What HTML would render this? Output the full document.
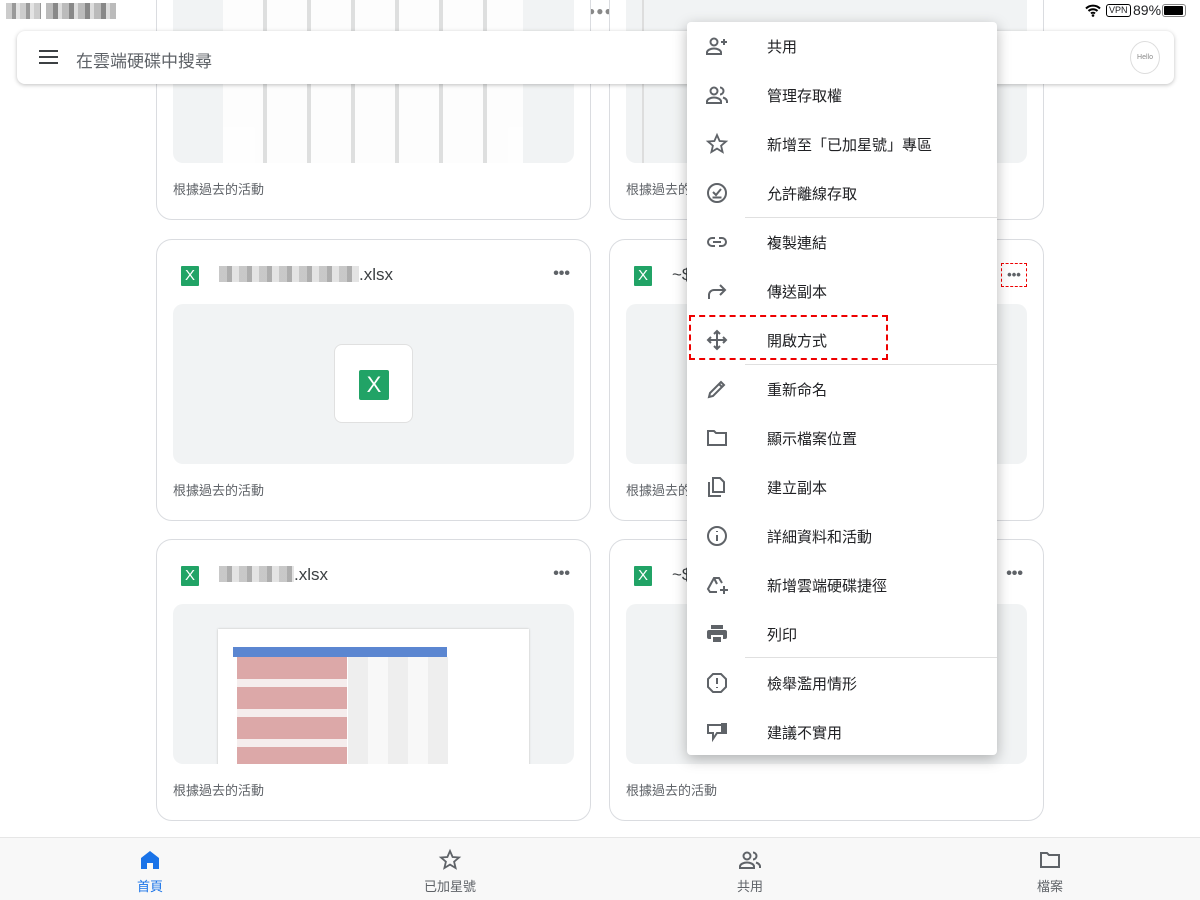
<!DOCTYPE html>
<html><head><meta charset="utf-8"><style>
*{margin:0;padding:0;box-sizing:border-box}
body{width:1200px;height:900px;overflow:hidden;background:#fff;font-family:"Liberation Sans","Noto Sans CJK TC",sans-serif;position:relative;color:#202124}
.abs{position:absolute}
.card{position:absolute;width:435px;height:282px;border:1px solid #dadce0;border-radius:16px;background:#fff}
.prev{position:absolute;left:16px;top:64px;width:401px;height:160px;background:#f1f3f4;border-radius:10px;overflow:hidden}
.foot{position:absolute;left:16px;top:240px;font-size:13px;color:#5f6368}
.xi{position:absolute;left:24px;top:26px;width:18px;height:20px;background:#21a366;color:#fff;font-size:15px;text-align:center;line-height:20px;border-radius:1px}
.name{position:absolute;left:62px;top:25px;font-size:17px;color:#3c4043}
.blur{display:inline-block;height:16px;background:repeating-linear-gradient(90deg,#bbb 0 8px,#999 8px 13px,#ddd 13px 20px);vertical-align:-2px;opacity:.8}
.dots{position:absolute;right:20px;top:25px;font-size:16px;letter-spacing:0px;color:#5f6368;font-weight:bold}
.menu{position:absolute;left:687px;top:22px;width:310px;height:733px;background:#fff;border-radius:4px;box-shadow:0 4px 14px rgba(0,0,0,.28)}
.mi{position:absolute;left:0;width:310px;height:49px}
.mi svg{position:absolute;left:18px;top:12px;width:24px;height:24px}
.mi span{position:absolute;left:80px;top:14px;font-size:15px;color:#202124}
.div{position:absolute;left:58px;width:252px;height:1px;background:#e0e0e0}
.nav{position:absolute;left:0;top:837px;width:1200px;height:63px;background:#f8f8f8;border-top:1px solid #e6e6e6}
.nv{position:absolute;top:10px;width:100px;text-align:center;font-size:13px;color:#5f6368}
.nv svg{display:block;margin:0 auto 4px;width:24px;height:24px}
</style></head><body>
<!-- status bar -->
<div class="abs" style="left:6px;top:3px;width:35px;height:16px;background:repeating-linear-gradient(90deg,#ccc 0 6px,#999 6px 10px,#e3e3e3 10px 14px)"></div>
<div class="abs" style="left:46px;top:3px;width:70px;height:16px;background:repeating-linear-gradient(90deg,#bbb 0 7px,#888 7px 12px,#ddd 12px 16px)"></div>
<div class="abs" style="left:588px;top:4px;font-size:12px;color:#888;letter-spacing:1px">●●●</div>
<svg class="abs" style="left:1085px;top:4px" width="16" height="13" viewBox="0 0 16 13"><path d="M1 4.5a10 10 0 0 1 14 0M3.5 7a6.5 6.5 0 0 1 9 0M6 9.5a3 3 0 0 1 4 0" stroke="#000" stroke-width="2" fill="none"/><circle cx="8" cy="11.5" r="1.3"/></svg>
<div class="abs" style="left:1106px;top:4px;border:1.3px solid #000;border-radius:3px;font-size:9px;padding:0 2px;line-height:11px">VPN</div>
<div class="abs" style="left:1133px;top:2px;font-size:14px">89%</div>
<div class="abs" style="left:1162px;top:4px;width:24px;height:13px;border:1px solid #888;border-radius:3px;padding:1px"><div style="width:19px;height:9px;background:#000;border-radius:1px"></div></div>

<!-- cards -->
<div class="card" style="left:156px;top:-62px">
 <div class="prev" style="top:14px;height:210px;left:16px">
  <div class="abs" style="left:50px;top:0;width:300px;height:210px;background:repeating-linear-gradient(90deg,#fff 0 40px,#ddd 40px 44px),#fff;opacity:.9"></div>
 </div>
 <div class="foot">根據過去的活動</div>
</div>
<div class="card" style="left:609px;top:-62px">
 <div class="prev" style="top:14px;height:210px"><div class="abs" style="left:16px;top:0;width:2px;height:210px;background:#ddd"></div></div>
 <div class="foot">根據過去的活動</div>
</div>
<div class="card" style="left:156px;top:239px">
 <div class="xi">X</div><div class="name"><span class="blur" style="width:140px"></span>.xlsx</div><div class="dots">•••</div>
 <div class="prev"><div class="abs" style="left:161px;top:40px;width:79px;height:79px;background:#fff;border:1px solid #e0e0e0;border-radius:8px"><div style="position:absolute;left:24px;top:25px;width:30px;height:30px;background:#21a366;color:#fff;font-size:22px;text-align:center;line-height:30px;border-radius:2px">X</div></div></div>
 <div class="foot">根據過去的活動</div>
</div>
<div class="card" style="left:609px;top:239px">
 <div class="xi">X</div><div class="name">~$</div>
 <div class="abs" style="left:391px;top:23px;width:26px;height:24px;border:1.5px dashed #e00;color:#5f6368;font-size:13px;font-weight:bold;text-align:center;line-height:21px">•••</div>
 <div class="prev"></div>
 <div class="foot">根據過去的活動</div>
</div>
<div class="card" style="left:156px;top:539px">
 <div class="xi">X</div><div class="name"><span class="blur" style="width:75px"></span>.xlsx</div><div class="dots">•••</div>
 <div class="prev"><div class="abs" style="left:45px;top:25px;width:311px;height:140px;background:#fff;box-shadow:0 0 2px #bbb">
  <div class="abs" style="left:15px;top:18px;width:214px;height:10px;background:#5b86d1"></div>
  <div class="abs" style="left:19px;top:28px;width:110px;height:112px;background:repeating-linear-gradient(180deg,#dca8a8 0 22px,#f5eded 22px 30px)"></div>
  <div class="abs" style="left:130px;top:28px;width:100px;height:112px;background:repeating-linear-gradient(90deg,#eee 0 20px,#f8f8f8 20px 40px)"></div>
 </div></div>
 <div class="foot">根據過去的活動</div>
</div>
<div class="card" style="left:609px;top:539px">
 <div class="xi">X</div><div class="name">~$</div><div class="dots">•••</div>
 <div class="prev"></div>
 <div class="foot">根據過去的活動</div>
</div>

<!-- search bar -->
<div class="abs" style="left:17px;top:31px;width:1157px;height:53px;background:#fff;border-radius:8px;box-shadow:0 1px 4px rgba(0,0,0,.25)">
 <div class="abs" style="left:22px;top:19px;width:19px;height:2px;background:#3c4043;box-shadow:0 6px 0 #3c4043,0 12px 0 #3c4043"></div>
 <div class="abs" style="left:59px;top:16px;font-size:17px;color:#5f6368">在雲端硬碟中搜尋</div>
 <div class="abs" style="left:1113px;top:10px;width:30px;height:33px;border:1px solid #ddd;border-radius:50%;font-size:7px;color:#888;text-align:center;line-height:31px">Hello</div>
</div>

<!-- menu -->
<div class="menu">
 <div class="mi" style="top:0"><svg viewBox="0 0 24 24" fill="none" stroke="#5f6368" stroke-width="2"><circle cx="9" cy="8" r="3.5"/><path d="M2 20v-1.5c0-2.5 4-4 7-4s7 1.5 7 4V20zM19 5v6M16 8h6"/></svg><span>共用</span></div>
 <div class="mi" style="top:49px"><svg viewBox="0 0 24 24" fill="none" stroke="#5f6368" stroke-width="2"><circle cx="9" cy="8" r="3.5"/><path d="M2 20v-1.5c0-2.5 4-4 7-4s7 1.5 7 4V20zM15 4.5a3.5 3.5 0 0 1 0 7M18 14.5c2 .7 4 2 4 4V20"/></svg><span>管理存取權</span></div>
 <div class="mi" style="top:98px"><svg viewBox="0 0 24 24" fill="none" stroke="#5f6368" stroke-width="1.8"><path d="M12 3l2.6 6 6.4.5-4.9 4.2 1.5 6.3L12 16.6 6.4 20l1.5-6.3L3 9.5 9.4 9z"/></svg><span>新增至「已加星號」專區</span></div>
 <div class="mi" style="top:147px"><svg viewBox="0 0 24 24" fill="none" stroke="#5f6368" stroke-width="2"><circle cx="12" cy="12" r="9"/><path d="M8 11l3 3 5-6M7.5 16.5h9"/></svg><span>允許離線存取</span></div>
 <div class="div" style="top:195px"></div>
 <div class="mi" style="top:196px"><svg viewBox="0 0 24 24" fill="none" stroke="#5f6368" stroke-width="2"><path d="M10 8H7a4 4 0 0 0 0 8h3M14 8h3a4 4 0 0 1 0 8h-3M8 12h8"/></svg><span>複製連結</span></div>
 <div class="mi" style="top:245px"><svg viewBox="0 0 24 24" fill="none" stroke="#5f6368" stroke-width="2"><path d="M4 20v-4a5 5 0 0 1 5-5h11M15 6l5 5-5 5"/></svg><span>傳送副本</span></div>
 <div class="mi" style="top:294px"><svg viewBox="0 0 24 24" fill="none" stroke="#5f6368" stroke-width="2"><path d="M12 3v18M3 12h18M9 6l3-3 3 3M9 18l3 3 3-3M6 9l-3 3 3 3M18 9l3 3-3 3"/></svg><span>開啟方式</span></div>
 <div class="abs" style="left:2px;top:293px;width:199px;height:45px;border:2px dashed #e00"></div>
 <div class="div" style="top:342px"></div>
 <div class="mi" style="top:343px"><svg viewBox="0 0 24 24" fill="none" stroke="#5f6368" stroke-width="2"><path d="M4 20l1-4L16 5l3 3L8 19zM14 7l3 3"/></svg><span>重新命名</span></div>
 <div class="mi" style="top:392px"><svg viewBox="0 0 24 24" fill="none" stroke="#5f6368" stroke-width="2"><path d="M3 5h6l2 2h10v12H3z"/></svg><span>顯示檔案位置</span></div>
 <div class="mi" style="top:441px"><svg viewBox="0 0 24 24" fill="none" stroke="#5f6368" stroke-width="2"><path d="M4 7v14h12M8 3h7l4 4v10H8z"/></svg><span>建立副本</span></div>
 <div class="mi" style="top:490px"><svg viewBox="0 0 24 24" fill="none" stroke="#5f6368" stroke-width="2"><circle cx="12" cy="12" r="9"/><path d="M12 11v6M12 7v1"/></svg><span>詳細資料和活動</span></div>
 <div class="mi" style="top:539px"><svg viewBox="0 0 24 24" fill="none" stroke="#5f6368" stroke-width="2"><path d="M12 19H5l-2-3 6-11h5l3 5M9 5l3 6M19 13v8M15 17h8"/></svg><span>新增雲端硬碟捷徑</span></div>
 <div class="mi" style="top:588px"><svg viewBox="0 0 24 24" fill="#5f6368"><rect x="6" y="3" width="12" height="4"/><rect x="2" y="8" width="20" height="9" rx="2"/><rect x="7" y="14" width="10" height="7" fill="#5f6368" stroke="#fff" stroke-width="2"/></svg><span>列印</span></div>
 <div class="div" style="top:635px"></div>
 <div class="mi" style="top:637px"><svg viewBox="0 0 24 24" fill="none" stroke="#5f6368" stroke-width="2"><path d="M8 3h8l5 5v8l-5 5H8l-5-5V8z"/><path d="M12 7v6M12 16v1"/></svg><span>檢舉濫用情形</span></div>
 <div class="mi" style="top:686px"><svg viewBox="0 0 24 24" fill="none" stroke="#5f6368" stroke-width="2"><path d="M3 5h14v8h-5l-4 6v-6H3z"/><rect x="17" y="4" width="4" height="9" fill="#5f6368"/></svg><span>建議不實用</span></div>
</div>

<!-- bottom nav -->
<div class="nav">
 <div class="nv" style="left:100px;color:#1a73e8"><svg viewBox="0 0 24 24" fill="#1a73e8"><path d="M12 3l9 7v11h-6v-6H9v6H3V10z"/></svg>首頁</div>
 <div class="nv" style="left:400px"><svg viewBox="0 0 24 24" fill="none" stroke="#5f6368" stroke-width="1.8"><path d="M12 3l2.6 6 6.4.5-4.9 4.2 1.5 6.3L12 16.6 6.4 20l1.5-6.3L3 9.5 9.4 9z"/></svg>已加星號</div>
 <div class="nv" style="left:700px"><svg viewBox="0 0 24 24" fill="none" stroke="#5f6368" stroke-width="2"><circle cx="9" cy="8" r="3.5"/><path d="M2 20v-1.5c0-2.5 4-4 7-4s7 1.5 7 4V20zM15 4.5a3.5 3.5 0 0 1 0 7M18 14.5c2 .7 4 2 4 4V20"/></svg>共用</div>
 <div class="nv" style="left:1000px"><svg viewBox="0 0 24 24" fill="none" stroke="#5f6368" stroke-width="2"><path d="M3 5h6l2 2h10v12H3z"/></svg>檔案</div>
</div>
</body></html>
